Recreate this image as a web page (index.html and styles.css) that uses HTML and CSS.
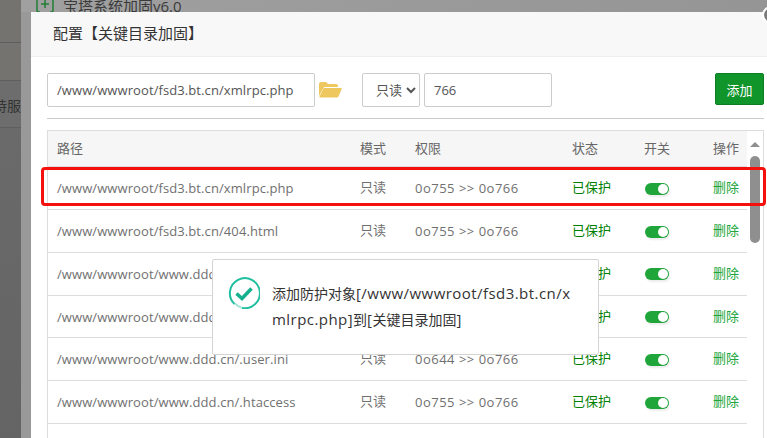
FILE: index.html
```html
<!DOCTYPE html>
<html lang="zh-CN">
<head>
<meta charset="utf-8">
<title>配置【关键目录加固】</title>
<link rel="stylesheet" href="styles.css">
</head>
<body>
<div class="backdrop">
  <aside class="side">
    <div class="side-row side-row-a"></div>
    <div class="side-row side-row-b"></div>
    <div class="side-row side-row-c"><span class="side-label">持服</span></div>
    <div class="side-rest"></div>
  </aside>
  <div class="main">
    <div class="main-title">
      <svg class="plus-icon" viewBox="0 0 18 18" width="18" height="18"><path d="M4 1H2.500Q1 1 1 3V15Q1 17 2.500 17H4M14 1H15.500Q17 1 17 3V15Q17 17 15.500 17H14M9 5V13M5 9H13" fill="none" stroke="#1f7d35" stroke-width="1.500"/></svg>
      <span>宝塔系统加固v6.0</span>
    </div>
  </div>
</div>

<section class="modal">
  <header class="modal-title">配置【关键目录加固】</header>
  <div class="modal-body">
    <form class="toolbar">
      <input class="field field-path" type="text" value="/www/wwwroot/fsd3.bt.cn/xmlrpc.php">
      <svg class="folder" viewBox="0 0 23 17" width="23" height="17"><path d="M0 15V3Q0 1 2 1H7L9 3H17Q19 3 19 5V6H6Q4.500 6 4 7.500Z" fill="#eec85f"/><path d="M4.500 7H22Q23 7 22.600 8.200L19.500 15.500Q19 16.500 18 16.500H1Q0 16.500 .5 15.500Z" fill="#eec85f"/></svg>
      <select class="field field-mode"><option>只读</option></select>
      <input class="field field-perm" type="text" value="766">
      <button class="add" type="button">添加</button>
    </form>
    <div class="rule"></div>
    <div class="table-box">
      <div class="table">
        <div class="row row-head">
          <span>路径</span><span>模式</span><span>权限</span><span>状态</span><span>开关</span><span>操作</span>
        </div>
        <div class="row">
          <span class="path">/www/wwwroot/fsd3.bt.cn/xmlrpc.php</span><span class="cjk">只读</span><span class="perm">0o755 &gt;&gt; 0o766</span><span class="cjk ok">已保护</span><span><i class="switch"></i></span><span class="cjk del">删除</span>
        </div>
        <div class="row">
          <span class="path">/www/wwwroot/fsd3.bt.cn/404.html</span><span class="cjk">只读</span><span class="perm">0o755 &gt;&gt; 0o766</span><span class="cjk ok">已保护</span><span><i class="switch"></i></span><span class="cjk del">删除</span>
        </div>
        <div class="row">
          <span class="path">/www/wwwroot/www.ddd.cn/index.php</span><span class="cjk">只读</span><span class="perm">0o644 &gt;&gt; 0o766</span><span class="cjk ok">已保护</span><span><i class="switch"></i></span><span class="cjk del">删除</span>
        </div>
        <div class="row">
          <span class="path">/www/wwwroot/www.ddd.cn/404.html</span><span class="cjk">只读</span><span class="perm">0o644 &gt;&gt; 0o766</span><span class="cjk ok">已保护</span><span><i class="switch"></i></span><span class="cjk del">删除</span>
        </div>
        <div class="row">
          <span class="path">/www/wwwroot/www.ddd.cn/.user.ini</span><span class="cjk">只读</span><span class="perm">0o644 &gt;&gt; 0o766</span><span class="cjk ok">已保护</span><span><i class="switch"></i></span><span class="cjk del">删除</span>
        </div>
        <div class="row">
          <span class="path">/www/wwwroot/www.ddd.cn/.htaccess</span><span class="cjk">只读</span><span class="perm">0o755 &gt;&gt; 0o766</span><span class="cjk ok">已保护</span><span><i class="switch"></i></span><span class="cjk del">删除</span>
        </div>
      </div>
      <div class="scroll">
        <i class="scroll-up"></i>
        <i class="scroll-thumb"></i>
      </div>
    </div>
  </div>
</section>

<div class="close-edge"></div>
<div class="highlight"></div>

<div class="toast">
  <svg class="toast-icon" viewBox="0 0 32 32" width="32" height="32"><path d="M6.500 27A15 15 0 1 1 14 30.900" fill="none" stroke="#1fbf9f" stroke-width="2"/><path d="M7 26.500A15 15 0 0 0 14 30.900" fill="none" stroke="#a5e6d8" stroke-width="2"/><path d="M8.500 16.500L14 21.500L23.500 11.500" fill="none" stroke="#17b08f" stroke-width="3.500"/></svg>
  <p class="toast-text">添加防护对象<span class="toast-latin">[/www/wwwroot/fsd3.bt.cn/xmlrpc.php]</span>到<span class="toast-latin">[</span>关键目录加固<span class="toast-latin">]</span></p>
</div>
</body>
</html>
```
FILE: styles.css
```css
* { box-sizing: border-box; }
html, body { margin: 0; height: 100%; overflow: hidden; }
body {
  position: relative;
  font-family: "Open Sans", "Noto Sans CJK SC", sans-serif;
  font-size: 13px;
  color: #666;
}
.backdrop { display: flex; height: 438px; }
.side { width: 21px; flex: none; display: flex; flex-direction: column; background: #666; }
.side-row { border-bottom: 1px solid #5e5e5e; background: #757370; }
.side-row-a { height: 43px; }
.side-row-b { height: 38px; }
.side-row-c { height: 47px; display: flex; align-items: center; justify-content: flex-end; background: #6d6d6d; white-space: nowrap; }
.side-label { color: #333; font-size: 14px; padding-top: 1px; }
.side-rest { flex: 1; background: linear-gradient(#6a6a6a, #646464); }
.main { flex: 1; background: #999; }
.main-title { display: flex; align-items: center; gap: 9px; height: 12px; padding-left: 15px; overflow: hidden; color: #3a3a3a; font-size: 15px; background: linear-gradient(90deg, #a0a0a0, #959595); }
.plus-icon { flex: none; margin-top: -5px; }
.main-title span { line-height: 12px; white-space: nowrap; }

.modal { position: absolute; left: 31px; top: 12px; width: 749px; height: 426px; background: #fff; overflow: hidden; }
.modal-title { height: 45px; padding-left: 22px; line-height: 42px; font-size: 15px; color: #333; background: #f8f8f8; border-bottom: 1px solid #eee; }
.modal-body { padding: 16px 16px 0; }
.toolbar { display: flex; align-items: flex-start; margin: 0; height: 34px; }
.field { height: 34px; border: 1px solid #ccc; border-radius: 2px; background: #fff; color: #555; font: inherit; outline: none; padding: 0 9px; }
.field-path { width: 268px; letter-spacing: .09px; }
.folder { margin: 8px 0 0 4px; flex: none; }
.field-mode { width: 58px; margin-left: 20px; padding: 0 0 0 9px; }
.field-perm { width: 128px; margin-left: 4px; }
.add { margin-left: auto; width: 49px; height: 32px; border: 1px solid #0e7d24; border-radius: 2px; background: #10952a; color: #fff; font: inherit; padding: 0; }
.rule { height: 1px; margin: 11px 0; background: #ccc; }

.table-box { display: flex; height: 320px; border: 1px solid #ddd; border-bottom: 0; }
.table { width: 699px; flex: none; }
.row { display: grid; grid-template-columns: 303px 55px 157px 72px 69px 43px; align-items: center; height: 42.75px; border-bottom: 1px solid #ddd; white-space: nowrap; line-height: 18px; color: #707070; }
.row > span { padding-left: 9px; }
.row > .cjk { padding-bottom: 2px; }
.path { letter-spacing: .09px; }
.perm { letter-spacing: .5px; }
.row-head { height: 36.4px; padding-bottom: 2px; background: #f6f6f6; border-bottom: 1px solid #ddd; color: #666; }
.row > .ok { color: #008000; }
.row > .del { color: #20a53a; }
.switch { display: block; position: relative; width: 24px; height: 12px; margin: 1px 0 0 1px; border-radius: 6px; background: #20a53a; box-shadow: 1px 2px 2px rgba(0, 0, 0, .08); }
.switch::after { content: ""; position: absolute; top: 1px; right: 1px; width: 10px; height: 10px; border-radius: 50%; background: #fff; }

.scroll { flex: 1; display: flex; flex-direction: column; align-items: center; }
.scroll-up { margin: 11px 0 0; width: 0; height: 0; border: 5px solid transparent; border-top: 0; border-bottom: 5px solid #8f8f8f; }
.scroll-thumb { margin-top: 9px; width: 10px; height: 87px; border-radius: 5px; background: #8f8f8f; }

.close-edge { position: absolute; left: 762px; top: 4px; width: 30px; height: 22px; border: 2px solid #fff; border-radius: 50%; background: #7a7a7a; }
.highlight { position: absolute; left: 41px; top: 167px; width: 725px; height: 39px; border: 3px solid #f5100c; border-radius: 4px; }

.toast { position: absolute; left: 212px; top: 259px; width: 387px; height: 96px; display: flex; align-items: flex-start; background: #fff; border: 1px solid #d4d4d4; border-radius: 2px; }
.toast-icon { flex: none; margin: 17px 0 0 15px; }
.toast-text { margin: 21px 0 0 12px; width: 300px; font-size: 14px; line-height: 26px; color: #333; word-break: break-all; }
.toast-latin { font-size: 15px; line-height: 18px; letter-spacing: .45px; }
```
